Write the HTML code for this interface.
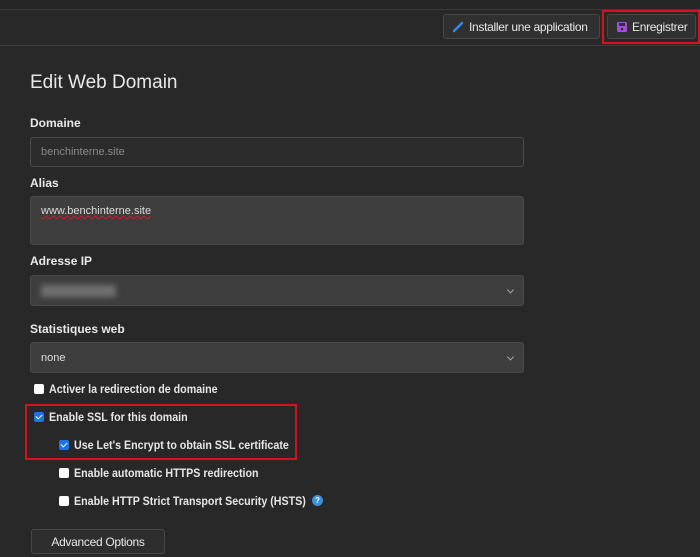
<!DOCTYPE html>
<html><head><meta charset="utf-8"><style>
*{box-sizing:border-box;margin:0;padding:0}
body{width:700px;height:557px;background:#282828;font-family:"Liberation Sans",sans-serif;color:#e6e6e6;position:relative;overflow:hidden;font-size:12px}
.abs{position:absolute}
.line{position:absolute;left:0;width:700px;height:1px;background:#3c3c3c}
.btn{position:absolute;background:#303030;border:1px solid #474747;border-radius:3px;color:#e8e8e8;font-size:12px;letter-spacing:-0.3px;display:flex;align-items:center;white-space:nowrap}
.lbl{position:absolute;left:30px;font-weight:bold;font-size:12px;color:#e8e8e8}
.inp{position:absolute;left:30px;width:494px;background:#3e3e3e;border:1px solid #4a4a4a;border-radius:3px;font-size:11px;color:#ddd;padding-left:10px;display:flex;align-items:center}
.chev{position:absolute;right:10px;top:50%;width:5px;height:5px;border-right:1.3px solid #aaa;border-bottom:1.3px solid #aaa;transform:translateY(-70%) rotate(45deg)}
.cb{position:absolute;width:10px;height:10px;background:#fff;border-radius:2px}
.cb.on{background:#1a73e8}
.cb.on:after{content:"";position:absolute;left:3px;top:1px;width:3px;height:5px;border-right:1.6px solid #fff;border-bottom:1.6px solid #fff;transform:rotate(45deg)}
.ct{position:absolute;font-size:12px;font-weight:bold;color:#e6e6e6;white-space:nowrap;transform:scaleX(0.89);transform-origin:left center}
</style></head><body>
<div class="abs" style="left:0;top:0;width:700px;height:9px;background:#262626"></div>
<div class="line" style="top:9px"></div>
<div class="line" style="top:45px"></div>
<div class="btn" style="left:443px;top:14px;width:157px;height:25px;padding-left:8px">
<svg width="12" height="12" viewBox="0 0 12 12"><path d="M2 10 L10 2" stroke="#2d8ce6" stroke-width="2.5" stroke-linecap="round"/></svg>
<span style="margin-left:5px">Installer une application</span></div>
<div class="abs" style="left:602px;top:10px;width:98px;height:34px;border:2px solid #d6121e"></div>
<div class="btn" style="left:607px;top:14px;width:89px;height:25px;padding-left:9px">
<svg width="10" height="10" viewBox="0 0 10 10"><rect x="0" y="0" width="10" height="10" rx="1.5" fill="#a44ce0"/><rect x="2" y="1" width="6" height="3" fill="#303030"/><circle cx="5" cy="7" r="1.3" fill="#303030"/></svg>
<span style="margin-left:5px">Enregistrer</span></div>

<div class="abs" style="left:30px;top:72px;font-size:19px;color:#e8e8e8">Edit Web Domain</div>
<div class="lbl" style="top:116px">Domaine</div>
<div class="inp" style="top:137px;height:30px;background:#2c2c2c;color:#888">benchinterne.site</div>
<div class="lbl" style="top:176px">Alias</div>
<div class="inp" style="top:196px;height:49px;align-items:flex-start;padding-top:8px"><span style="text-decoration:underline wavy #d01a2a;text-decoration-thickness:1px">www.benchinterne.site</span></div>
<div class="lbl" style="top:254px">Adresse IP</div>
<div class="inp" style="top:275px;height:31px"><div style="width:75px;height:12px;background:#707070;filter:blur(3px)"></div><div class="chev"></div></div>
<div class="lbl" style="top:322px">Statistiques web</div>
<div class="inp" style="top:342px;height:31px">none<div class="chev"></div></div>

<div class="cb" style="left:34px;top:384px"></div><div class="ct" style="left:49px;top:382px">Activer la redirection de domaine</div>
<div class="abs" style="left:25px;top:404px;width:272px;height:56px;border:2px solid #d6121e"></div>
<div class="cb on" style="left:34px;top:412px"></div><div class="ct" style="left:49px;top:410px">Enable SSL for this domain</div>
<div class="cb on" style="left:59px;top:440px"></div><div class="ct" style="left:74px;top:438px">Use Let's Encrypt to obtain SSL certificate</div>
<div class="cb" style="left:59px;top:468px"></div><div class="ct" style="left:74px;top:466px">Enable automatic HTTPS redirection</div>
<div class="cb" style="left:59px;top:496px"></div><div class="ct" style="left:74px;top:494px">Enable HTTP Strict Transport Security (HSTS)</div>
<div class="abs" style="left:312px;top:495px;width:11px;height:11px;border-radius:50%;background:#3a8fd6;color:#fff;font-size:8px;font-weight:bold;text-align:center;line-height:11px">?</div>
<div class="btn" style="left:31px;top:529px;width:134px;height:25px;justify-content:center;background:#2e2e2e">Advanced Options</div>
</body></html>
